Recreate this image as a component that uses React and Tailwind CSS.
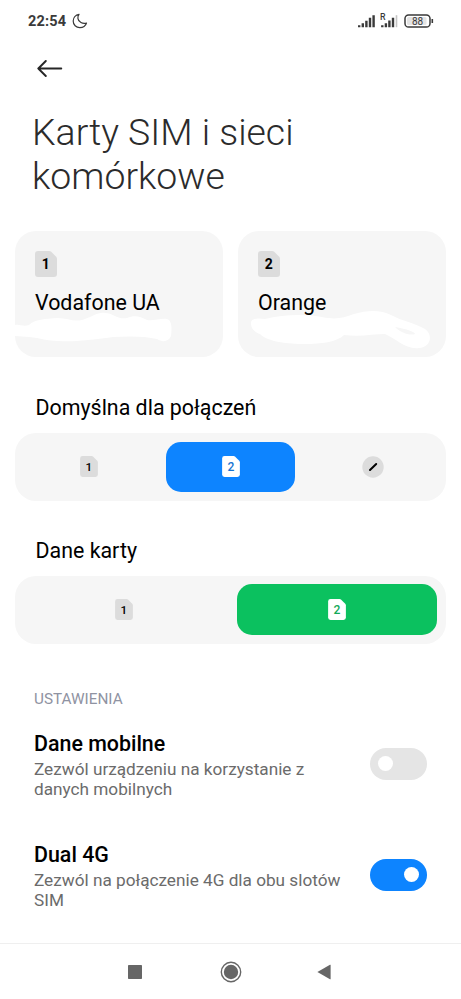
import clsx from "clsx";

function SimBadge({ number, className, textClassName }) {
  return (
    <svg viewBox="0 0 22 26" className={className}>
      <path
        d="M3 0H14.2Q15.4 0 16.2 .8L21.2 5.8Q22 6.6 22 7.8V23Q22 26 19 26H3Q0 26 0 23V3Q0 0 3 0Z"
        fill="currentColor"
      />
      <text x="10.8" y="18.2" textAnchor="middle" className={textClassName}>
        {number}
      </text>
    </svg>
  );
}

function StatusBar() {
  return (
    <header className="flex h-[42px] items-center pl-7 pr-[27px] text-[#3a3a3a]">
      <span className="pt-[2px] text-[14.5px] font-bold leading-none tracking-[0.2px]">22:54</span>
      <svg className="ml-[6px] h-[16px] w-[16px]" viewBox="0 0 16 16" fill="none" stroke="currentColor">
        <path
          d="M7 1.3C3.6 1.8 1.2 4.6 1.2 8A6.6 6.6 0 0 0 7.9 14.7C11 14.7 13.6 12.8 14.5 10C10.6 11 6.4 9.2 5.9 5.4C5.7 3.9 6.1 2.5 7 1.3Z"
          strokeWidth="1.2"
          strokeLinejoin="round"
        />
      </svg>
      <svg className="ml-auto h-[16px] w-[42px]" viewBox="0 0 42 16">
        <path
          d="M3.2 14.2v-2M6.8 14.2V10.2M10.4 14.2V7.8M14 14.2V4.8M17.6 14.2V2.2M26.3 14.2v-2M29.9 14.2V10.2M33.4 14.2V7.5M37 14.2V4.8"
          stroke="currentColor"
          strokeWidth="2.4"
        />
        <path d="M40.5 14.2V2.2" stroke="#c4c4c4" strokeWidth="1.6" />
        <text x="24" y="7.4" className="fill-current text-[8.8px] font-medium">
          R
        </text>
      </svg>
      <svg className="ml-[6px] h-[14px] w-[30px]" viewBox="0 0 30 14">
        <rect x="1" y="1" width="25" height="12" rx="3.6" fill="none" stroke="currentColor" strokeWidth="1.5" />
        <path d="M28.3 5v4" stroke="currentColor" strokeWidth="1.6" />
        <rect x="3" y="3" width="19.5" height="8" rx="1.5" fill="#e4e4e4" />
        <text x="13.5" y="10.5" textAnchor="middle" className="fill-current text-[10px]">
          88
        </text>
      </svg>
    </header>
  );
}

function SimCard({ number, name, children }) {
  return (
    <div className="relative h-[126px] flex-1 overflow-hidden rounded-[21px] bg-[#f6f6f6] pl-5 pt-5">
      {children}
      <SimBadge
        number={number}
        className="h-[26px] w-[22px] text-[#dcdcdc]"
        textClassName="fill-black text-[14px] font-bold"
      />
      <p className="relative mt-3 text-[21.4px] leading-7">{name}</p>
    </div>
  );
}

function Segment({ label, className, children }) {
  return (
    <section className={className}>
      <h2 className="pl-[20.5px] text-[21.4px] leading-7">{label}</h2>
      <div className="mt-[11px] flex h-[68px] items-stretch gap-[13px] rounded-[21px] bg-[#f6f6f6] px-[9px] pb-[9px] pt-[8.5px]">
        {children}
      </div>
    </section>
  );
}

function Option({ className, children }) {
  return (
    <button className={clsx("flex flex-1 items-center justify-center rounded-[15px]", className)}>
      {children}
    </button>
  );
}

function Toggle({ on }) {
  return (
    <button
      className={clsx(
        "flex h-8 w-[57px] shrink-0 items-center rounded-full px-2",
        on ? "justify-end bg-[#0d84ff]" : "justify-start bg-[#e5e5e5]"
      )}
    >
      <span className="h-[15px] w-[15px] rounded-full bg-white" />
    </button>
  );
}

function SettingRow({ title, description, on, className }) {
  return (
    <div className={clsx("flex items-center justify-between px-[19px]", className)}>
      <div className="w-[320px]">
        <h3 className="text-[21.4px] font-medium leading-7">{title}</h3>
        <p className="relative top-[2px] -mt-px text-[17.2px] leading-5 text-[#6b6b6b]">{description}</p>
      </div>
      <Toggle on={on} />
    </div>
  );
}

export default function App() {
  return (
    <div className="flex h-[999px] w-[461px] flex-col overflow-hidden bg-white font-[Roboto,sans-serif] text-black">
      <StatusBar />
      <div className="flex h-[68px] items-start pl-[37px] pt-[18px]">
        <svg
          className="h-[17px] w-[26px]"
          viewBox="0 0 26 17"
          fill="none"
          stroke="#262626"
          strokeWidth="1.9"
          strokeLinecap="round"
          strokeLinejoin="round"
        >
          <path d="M24.3 8.5H1.3M8.8 1L1.3 8.5L8.8 16" />
        </svg>
      </div>
      <h1 className="h-[88px] pl-8 text-[37.4px] font-light leading-[44px] text-[#2b2b2b]">
        Karty SIM i sieci
        <br />
        komórkowe
      </h1>

      <main className="flex flex-1 flex-col px-[15px]">
        <div className="mt-[33px] flex gap-[15px]">
          <SimCard number="1" name="Vodafone UA">
            <svg className="absolute left-0 top-0 h-[126px] w-[208px]" viewBox="0 0 208 126" fill="white">
              <path d="M0 94C5 93 8 96 14 94C20 88 30 88 43 87C53 87 60 92 70 88C77 86 82 81 90 82C98 82 103 89 112 87C119 84 125 85 132 89C139 90 146 87 152 88C157 89 157 98 156 105C154 110 148 112 142 108C130 105 113 105 98 106C75 109 60 111 43 110C32 110 26 107 14 106L0 105Z" />
            </svg>
          </SimCard>
          <SimCard number="2" name="Orange">
            <svg className="absolute left-0 top-0 h-[126px] w-[208px]" viewBox="0 0 208 126" fill="white">
              <path
                fillRule="evenodd"
                d="M13 93C12 87 19 87 27 88C45 83 70 83 84 86C98 89 105 87 116 83C130 79 143 79 153 84C164 90 177 92 187 98C196 105 192 116 181 117C168 119 157 107 147 103C135 103 123 106 106 104C99 111 83 113 67 113C50 113 30 111 22 103C18 102 13 98 13 93ZM157 96C163 102 172 105 177 103C177 101 169 98 157 96Z"
              />
            </svg>
          </SimCard>
        </div>

        <Segment label="Domyślna dla połączeń" className="mt-[37px]">
          <Option>
            <SimBadge
              number="1"
              className="h-[21px] w-[18px] text-[#dcdcdc]"
              textClassName="fill-black text-[14.5px] font-medium"
            />
          </Option>
          <Option className="bg-[#0d84ff]">
            <SimBadge
              number="2"
              className="h-[21px] w-[18px] text-white"
              textClassName="fill-[#1673d2] text-[15px] font-medium"
            />
          </Option>
          <Option>
            <svg className="h-[22px] w-[22px]" viewBox="0 0 22 22">
              <circle cx="11" cy="11" r="10.7" fill="#dcdcdc" />
              <path d="M8 14L14.2 8" stroke="black" strokeWidth="2" strokeLinecap="round" />
            </svg>
          </Option>
        </Segment>

        <Segment label="Dane karty" className="mt-[35.5px]">
          <Option>
            <SimBadge
              number="1"
              className="h-[21px] w-[18px] text-[#dcdcdc]"
              textClassName="fill-black text-[14.5px] font-medium"
            />
          </Option>
          <Option className="bg-[#0bc15f]">
            <SimBadge
              number="2"
              className="h-[21px] w-[18px] text-white"
              textClassName="fill-[#12a957] text-[15px] font-medium"
            />
          </Option>
        </Segment>

        <h2 className="mt-[45.5px] pl-[19px] text-[15.3px] leading-5 text-[#8f93a2]">USTAWIENIA</h2>
        <SettingRow
          title="Dane mobilne"
          description="Zezwól urządzeniu na korzystanie z danych mobilnych"
          className="mt-[21px]"
        />
        <SettingRow
          title="Dual 4G"
          description="Zezwól na połączenie 4G dla obu slotów SIM"
          on
          className="mt-11"
        />
      </main>

      <nav className="flex h-14 items-center border-t border-[#efefef] pl-[128px] text-[#666666]">
        <svg className="h-[14px] w-[14px]" viewBox="0 0 14 14" fill="currentColor">
          <rect width="14" height="14" rx=".7" />
        </svg>
        <svg className="ml-[78px] h-[22px] w-[22px]" viewBox="0 0 22 22">
          <circle cx="11" cy="11" r="9.7" fill="none" stroke="currentColor" strokeWidth="1.4" />
          <circle cx="11" cy="11" r="7.2" fill="currentColor" />
        </svg>
        <svg className="ml-[75px] h-4 w-[14px]" viewBox="0 0 14 16" fill="currentColor">
          <path d="M.4 8L13 .8Q13.6 .5 13.6 1V15Q13.6 15.5 13 15.2Z" />
        </svg>
      </nav>
    </div>
  );
}
